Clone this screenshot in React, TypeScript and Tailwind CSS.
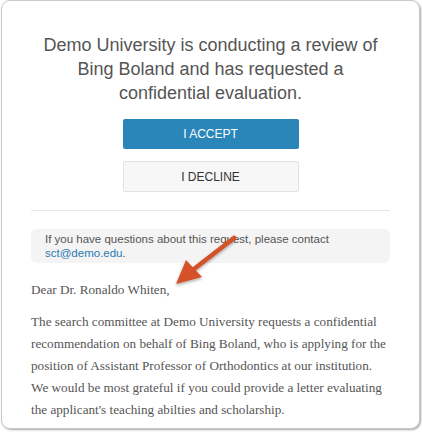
import React from 'react';

const gothic = { fontFamily: '"Liberation Sans", Arial, sans-serif' };

function Arrow() {
  return (
    <svg
      className="pointer-events-none absolute left-[165px] top-[228px]"
      width="80"
      height="64"
      viewBox="0 0 80 64"
    >
      <defs>
        <filter id="sh" x="-30%" y="-30%" width="160%" height="160%">
          <feDropShadow dx="0" dy="1.5" stdDeviation="1.5" floodColor="#000" floodOpacity="0.35" />
        </filter>
      </defs>
      <g filter="url(#sh)">
        <line x1="67" y1="9" x2="27" y2="40" stroke="#d4512a" strokeWidth="4.5" strokeLinecap="round" />
        <polygon points="9,55 19,31 35,48" fill="#d4512a" />
      </g>
    </svg>
  );
}

export default function App() {
  return (
    <div className="h-[432px] w-[422px] bg-white">
      <div className="relative ml-[1px] h-[429px] w-[419px] rounded-[9px] border border-[#c9c9c9] bg-white shadow-[1px_1px_2px_rgba(0,0,0,0.35)]">
        <div className="flex flex-col px-[29px] pt-[32px]">
          <h1
            style={gothic}
            className="whitespace-nowrap text-center text-[18px] leading-[24px] text-[#555]"
          >
            Demo University is conducting a review of
            <br />
            Bing Boland and has requested a
            <br />
            confidential evaluation.
          </h1>

          <div className="mt-[14px] flex flex-col items-center gap-[12px]">
            <button
              type="button"
              style={gothic}
              className="h-[30px] w-[176px] rounded-[2px] bg-[#2a86b9] text-[12px] text-white"
            >
              I ACCEPT
            </button>
            <button
              type="button"
              style={gothic}
              className="h-[31px] w-[176px] rounded-[2px] border border-[#e2e2e2] bg-[#f7f7f7] text-[12px] text-[#333]"
            >
              I DECLINE
            </button>
          </div>

          <div className="mt-[18px] h-px w-full bg-[#e6e6e6]" />

          <div className="mt-[18px] rounded-[6px] bg-[#f4f4f4] px-[14px] py-[3px] font-['Liberation_Sans',sans-serif] text-[11.5px] leading-[14px] text-[#555]">
            If you have questions about this request, please contact
            <br />
            <a href="#" className="text-[#2a7bb5]">
              sct@demo.edu
            </a>
            .
          </div>

          <p className="mt-[16px] font-['Liberation_Serif',serif] text-[13.2px] leading-[22px] text-[#555]">
            Dear Dr. Ronaldo Whiten,
          </p>
          <p className="mt-[10px] whitespace-nowrap font-['Liberation_Serif',serif] text-[13.2px] leading-[22px] text-[#555]">
            The search committee at Demo University requests a confidential
            <br />
            recommendation on behalf of Bing Boland, who is applying for the
            <br />
            position of Assistant Professor of Orthodontics at our institution.
            <br />
            We would be most grateful if you could provide a letter evaluating
            <br />
            the applicant's teaching abilties and scholarship.
          </p>
        </div>
        <Arrow />
      </div>
    </div>
  );
}
